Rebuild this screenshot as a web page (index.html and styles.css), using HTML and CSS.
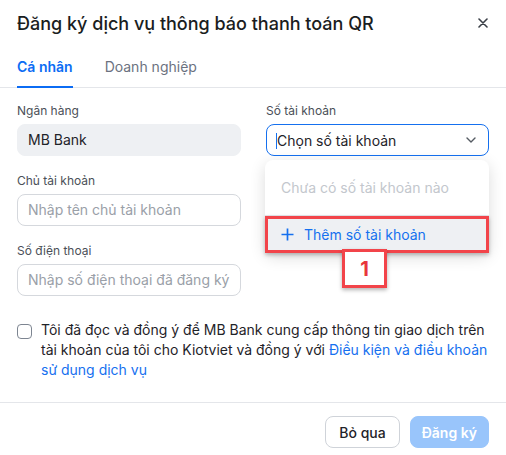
FILE: index.html
```html
<!DOCTYPE html>
<html lang="vi">
<head>
    <meta charset="UTF-8">
    <meta name="viewport" content="width=device-width, initial-scale=1.0">
    <title>Đăng ký dịch vụ thông báo thanh toán QR</title>
    <link rel="stylesheet" href="styles.css">
</head>
<body>
    <div class="modal">
        <div class="modal-header">
            <h1 class="modal-title">Đăng ký dịch vụ thông báo thanh toán QR</h1>
            <button class="close-btn" aria-label="Đóng">
                <svg width="10" height="10" viewBox="0 0 10 10"><path d="M1 1L9 9M9 1L1 9" stroke="#3a3f47" stroke-width="1.6" stroke-linecap="round"/></svg>
            </button>
        </div>

        <div class="tabs">
            <div class="tab active">Cá nhân</div>
            <div class="tab">Doanh nghiệp</div>
        </div>

        <div class="form-grid">
            <div class="field">
                <label class="field-label">Ngân hàng</label>
                <div class="input input-disabled">MB Bank</div>
            </div>

            <div class="field field-select">
                <label class="field-label">Số tài khoản</label>
                <div class="select">
                    <span class="caret"></span>
                    <span class="select-text">Chọn số tài khoản</span>
                    <svg class="chevron" width="10" height="6" viewBox="0 0 10 6"><path d="M1 1L5 5L9 1" fill="none" stroke="#555b63" stroke-width="1.4" stroke-linecap="round" stroke-linejoin="round"/></svg>
                </div>

                <div class="dropdown">
                    <div class="dropdown-empty">Chưa có số tài khoản nào</div>
                    <div class="dropdown-add">
                        <svg width="13" height="13" viewBox="0 0 13 13"><path d="M6.5 0.5V12.5M0.5 6.5H12.5" stroke="#1570ef" stroke-width="1.7"/></svg>
                        <span>Thêm số tài khoản</span>
                    </div>
                    <div class="step-badge">1</div>
                </div>
            </div>

            <div class="field">
                <label class="field-label">Chủ tài khoản</label>
                <div class="input placeholder">Nhập tên chủ tài khoản</div>
            </div>
            <div></div>

            <div class="field">
                <label class="field-label">Số điện thoại</label>
                <div class="input placeholder">Nhập số điện thoại đã đăng ký</div>
            </div>
        </div>

        <div class="agree">
            <span class="checkbox"></span>
            <p class="agree-text">Tôi đã đọc và đồng ý để MB Bank cung cấp thông tin giao dịch trên tài khoản của tôi cho Kiotviet và đồng ý với <a href="#">Điều kiện và điều khoản sử dụng dịch vụ</a></p>
        </div>

        <div class="modal-footer">
            <button class="btn btn-outline">Bỏ qua</button>
            <button class="btn btn-primary" disabled>Đăng ký</button>
        </div>
    </div>
</body>
</html>
```

FILE: styles.css
```css
* {
    box-sizing: border-box;
}

body {
    margin: 0;
    font-family: 'Inter', 'Noto Sans', sans-serif;
    background-color: #fff;
    color: #1f2329;
}

.modal {
    width: 506px;
    height: 455px;
    background: #fff;
}

/* header */
.modal-header {
    display: flex;
    align-items: center;
    justify-content: space-between;
    padding: 12px 17px 0 17px;
}

.modal-title {
    margin: 0;
    font-size: 18px;
    line-height: 24px;
    font-weight: 500;
    color: #1a1d21;
}

.close-btn {
    border: none;
    background: none;
    padding: 0;
    width: 12px;
    height: 12px;
    display: flex;
    align-items: center;
    justify-content: center;
    margin-top: -2px;
}

/* tabs */
.tabs {
    display: flex;
    gap: 32px;
    padding: 0 17px;
    border-bottom: 1px solid #e4e6ea;
}

.tab {
    font-size: 14px;
    line-height: 20px;
    padding: 21px 0 9px 0;
    margin-bottom: -1px;
    color: #6b7280;
    border-bottom: 2px solid transparent;
}

.tab.active {
    color: #0b6cf4;
    font-weight: 600;
    border-bottom-color: #0b6cf4;
}

/* form */
.form-grid {
    display: grid;
    grid-template-columns: 224px 223px;
    column-gap: 25px;
    row-gap: 16px;
    padding: 14px 17px 0 17px;
}

.field {
    display: flex;
    flex-direction: column;
    gap: 4px;
}

.field-select {
    position: relative;
}

.field-label {
    font-size: 12px;
    line-height: 18px;
    color: #4b5058;
}

.input {
    height: 32px;
    border: 1px solid #d5d8dd;
    border-radius: 8px;
    padding: 0 10px;
    font-size: 14px;
    line-height: 30px;
    white-space: nowrap;
    overflow: hidden;
}

.input-disabled {
    background: #eef0f3;
    border-color: #eef0f3;
    color: #1f2329;
}

.placeholder {
    color: #9aa0a8;
}

.select {
    height: 32px;
    border: 1px solid #1570ef;
    border-radius: 8px;
    padding: 0 10px;
    display: flex;
    align-items: center;
    font-size: 14px;
    position: relative;
}

.caret {
    position: absolute;
    left: 9px;
    top: 8px;
    width: 1px;
    height: 16px;
    background: #1570ef;
}

.select-text {
    flex: 1;
}

.chevron {
    margin-right: 2px;
}

/* dropdown overlay */
.dropdown {
    position: absolute;
    left: -1px;
    top: 58px;
    width: 224px;
    background: #fff;
    border-radius: 8px;
    box-shadow: 0 4px 16px rgba(0, 0, 0, 0.14);
    z-index: 2;
}

.dropdown-empty {
    height: 56px;
    display: flex;
    align-items: center;
    padding-left: 16px;
    font-size: 14px;
    color: #c3c7cd;
    border-bottom: 1px solid #e4e6ea;
}

.dropdown-add {
    height: 37px;
    display: flex;
    align-items: center;
    gap: 10px;
    padding-left: 13px;
    font-size: 14px;
    color: #1570ef;
    background: #eef0f3;
    border: 3px solid #f2444a;
    box-shadow: 0 2px 4px rgba(0, 0, 0, 0.25);
}

.step-badge {
    position: absolute;
    left: 77px;
    top: 89px;
    width: 45px;
    height: 39px;
    background: #fff;
    border: 3px solid #f2444a;
    box-shadow: 0 2px 4px rgba(0, 0, 0, 0.3);
    color: #e8363c;
    font-size: 20px;
    font-weight: 700;
    display: flex;
    align-items: center;
    justify-content: center;
}

/* agreement */
.agree {
    display: flex;
    gap: 9px;
    padding: 24px 17px 0 17px;
}

.checkbox {
    flex: none;
    width: 15px;
    height: 15px;
    margin-top: 4px;
    border: 1px solid #7d8591;
    border-radius: 4px;
}

.agree-text {
    margin: 0;
    font-size: 14px;
    line-height: 20px;
    color: #1f2329;
}

.agree-text a {
    color: #1570ef;
    text-decoration: none;
}

/* footer */
.modal-footer {
    margin-top: 22px;
    border-top: 1px solid #e4e6ea;
    display: flex;
    justify-content: flex-end;
    gap: 10px;
    padding: 13px 17px 0 17px;
}

.btn {
    height: 32px;
    padding: 0 13px;
    border-radius: 8px;
    font-family: inherit;
    font-size: 14px;
    font-weight: 500;
}

.btn-outline {
    background: #fff;
    border: 1px solid #cfd3d9;
    color: #1f2329;
}

.btn-primary {
    padding: 0 11px;
    background: #99c5fb;
    border: 1px solid #99c5fb;
    color: #fff;
    font-weight: 600;
}
```
